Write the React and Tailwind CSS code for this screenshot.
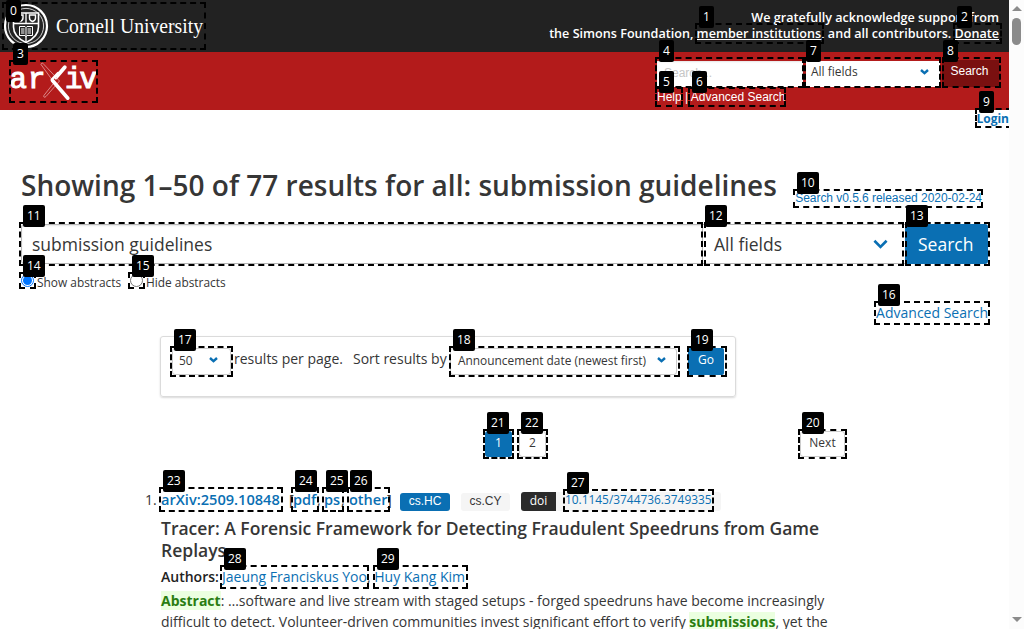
import React from "react";

const marks = [
  { n: 0, box: "left-[2px] top-[2px] w-[204px] h-[48px]", tag: "left-[6px] top-[0px]" },
  { n: 1, box: "left-[695px] top-[23px] w-[129px] h-[21px]", tag: "left-[699px] top-[6px]" },
  { n: 2, box: "left-[953px] top-[23px] w-[49px] h-[21px]", tag: "left-[957px] top-[6px]" },
  { n: 3, box: "left-[9px] top-[60px] w-[89px] h-[43px]", tag: "left-[13px] top-[43px]" },
  { n: 4, box: "left-[655px] top-[57px] w-[149px] h-[31px]", tag: "left-[659px] top-[40px]" },
  { n: 5, box: "left-[655px] top-[87px] w-[28px] h-[20px]", tag: "left-[659px] top-[71px]" },
  { n: 6, box: "left-[688px] top-[87px] w-[98px] h-[20px]", tag: "left-[692px] top-[71px]" },
  { n: 7, box: "left-[804px] top-[57px] w-[137px] h-[31px]", tag: "left-[806px] top-[40px]" },
  { n: 8, box: "left-[942px] top-[57px] w-[59px] h-[31px]", tag: "left-[943px] top-[40px]" },
  { n: 9, box: "left-[975px] top-[108px] w-[37px] h-[20px]", tag: "left-[979px] top-[91px]" },
  { n: 10, box: "left-[793px] top-[189px] w-[190px] h-[19px]", tag: "left-[797px] top-[172px]" },
  { n: 11, box: "left-[19px] top-[222px] w-[684px] h-[44px]", tag: "left-[23px] top-[205px]" },
  { n: 12, box: "left-[704px] top-[222px] w-[200px] h-[44px]", tag: "left-[705px] top-[205px]" },
  { n: 13, box: "left-[905px] top-[222px] w-[85px] h-[44px]", tag: "left-[906px] top-[205px]" },
  { n: 14, box: "left-[19px] top-[272px] w-[17px] h-[17px]", tag: "left-[23px] top-[255px]" },
  { n: 15, box: "left-[128px] top-[272px] w-[17px] h-[17px]", tag: "left-[132px] top-[255px]" },
  { n: 16, box: "left-[874px] top-[301px] w-[116px] h-[24px]", tag: "left-[878px] top-[284px]" },
  { n: 17, box: "left-[170px] top-[346px] w-[63px] h-[31px]", tag: "left-[174px] top-[329px]" },
  { n: 18, box: "left-[449px] top-[346px] w-[231px] h-[31px]", tag: "left-[453px] top-[329px]" },
  { n: 19, box: "left-[687px] top-[346px] w-[40px] h-[31px]", tag: "left-[691px] top-[329px]" },
  { n: 20, box: "left-[798px] top-[429px] w-[49px] h-[30px]", tag: "left-[802px] top-[412px]" },
  { n: 21, box: "left-[483px] top-[429px] w-[31px] h-[30px]", tag: "left-[487px] top-[412px]" },
  { n: 22, box: "left-[517px] top-[429px] w-[31px] h-[30px]", tag: "left-[521px] top-[412px]" },
  { n: 23, box: "left-[159px] top-[487px] w-[124px] h-[25px]", tag: "left-[163px] top-[470px]" },
  { n: 24, box: "left-[291px] top-[487px] w-[28px] h-[25px]", tag: "left-[295px] top-[470px]" },
  { n: 25, box: "left-[322px] top-[487px] w-[22px] h-[25px]", tag: "left-[326px] top-[470px]" },
  { n: 26, box: "left-[347px] top-[487px] w-[43px] h-[25px]", tag: "left-[350px] top-[470px]" },
  { n: 27, box: "left-[563px] top-[489px] w-[151px] h-[23px]", tag: "left-[567px] top-[472px]" },
  { n: 28, box: "left-[220px] top-[565px] w-[149px] h-[24px]", tag: "left-[224px] top-[548px]" },
  { n: 29, box: "left-[373px] top-[565px] w-[95px] h-[24px]", tag: "left-[377px] top-[548px]" },
];

function Marks() {
  return (
    <div className="pointer-events-none absolute inset-y-0 left-0 w-[1009px] overflow-hidden">
      {marks.map((m) => (
        <div key={m.n} className={"absolute border-2 border-dashed border-black " + m.box} />
      ))}
      {marks.map((m) => (
        <div
          key={m.n}
          className={"absolute h-[22px] rounded-[2px] bg-black px-1 text-[12px] leading-[21px] text-white " + m.tag}
        >
          {m.n}
        </div>
      ))}
    </div>
  );
}

function Chevron({ className, thick }) {
  return (
    <svg viewBox="0 0 16 10" className={className} fill="none" stroke="#0a6fb3" strokeWidth={thick}>
      <path d="M1.5 1.500 8 8l6.500-6.500" />
    </svg>
  );
}

function SmallChevron() {
  return (
    <svg viewBox="0 0 9 6" className="mb-[1px] h-[6px] w-[9px]" fill="none" stroke="#0a6fb3" strokeWidth="2.400">
      <path d="M1 1 4.500 4.200 8 1" />
    </svg>
  );
}

function CornellLogo() {
  return (
    <svg viewBox="0 0 210 52" className="h-[52px] w-[210px]">
      <circle cx="26" cy="26" r="21" fill="none" stroke="#fff" strokeWidth="2.2" />
      <circle cx="26" cy="26" r="17.6" fill="none" stroke="#fff" strokeWidth="0.800" />
      <path d="M13.500 13h25v14c0 7-5 12-12.500 15.500C18.500 39 13.500 34 13.500 27Z" fill="#222" stroke="#fff" strokeWidth="1.600" />
      <path d="M14 23.500h24.500M26 13v10M26 36v6" stroke="#fff" strokeWidth="1.300" />
      <path d="M17 15h6v3c0 2-1.500 3-3 3.500-1.500-.5-3-1.500-3-3.500ZM29.500 15h6v3c0 2-1.500 3-3 3.500-1.500-.5-3-1.500-3-3.500Z" fill="none" stroke="#fff" strokeWidth="1.400" />
      <path d="M19.500 26.500h5.500l1 1 1-1h5.500v9H27l-1 1-1-1h-5.500ZM26 27.500v9M21 29h3.500M21 31h3.500M21 33h3.500M27.500 29H31M27.500 31H31M27.500 33H31" fill="none" stroke="#fff" strokeWidth="1" />
      <text x="56" y="33" fill="#fff" fontFamily="Liberation Serif, serif" fontSize="21" textLength="147" lengthAdjust="spacingAndGlyphs">
        Cornell University
      </text>
    </svg>
  );
}

function ArxivLogo() {
  return (
    <svg viewBox="10 60 90 44" className="h-[44px] w-[90px]">
      <g fill="#fff" stroke="#fff" strokeWidth="1.100" fontFamily="Liberation Mono, monospace" fontSize="29">
        <text x="9.500 28" y="88">ar</text>
        <text x="65 79.500" y="88">iv</text>
      </g>
      <path d="M64.800 67.200 56 77.500" stroke="#fff" strokeWidth="3.800" strokeLinecap="round" />
      <path d="M41 64.500c.5-1.800 2-1.800 3 0L59.500 81 46 96.500c-1.500 1.500-3 .5-2-1.200L53 84" fill="none" stroke="#e9b5b5" strokeWidth="0.700" />
      <path d="M41 64.500 51.500 79" stroke="#e9b5b5" strokeWidth="0.700" />
      <path d="M52.500 80.500 67.800 98.200" stroke="#fff" strokeWidth="3.600" strokeLinecap="round" />
      <path d="M51.800 79.500 58 73" stroke="#fff" strokeWidth="2.500" strokeLinecap="round" />
    </svg>
  );
}

function Radio({ on }) {
  return on ? (
    <span className="flex size-[13px] items-center justify-center rounded-full border border-[#0075ff] bg-white">
      <span className="size-[9px] rounded-full bg-[#0075ff]" />
    </span>
  ) : (
    <span className="block size-[13px] rounded-full border border-[#767676] bg-white" />
  );
}

function Scrollbar() {
  return (
    <div className="flex h-full w-[15px] flex-col items-center justify-between bg-[#fcfcfc] pt-[6px] pb-[7px]">
      <div className="flex flex-col items-center gap-[7px]">
        <svg viewBox="0 0 10 5" className="h-[5px] w-[10px]" fill="#8b8b8b"><path d="M0 5 5 0l5 5Z" /></svg>
        <div className="h-[27px] w-[9px] rounded-full bg-[#8b8b8b]" />
      </div>
      <svg viewBox="0 0 10 5" className="h-[5px] w-[10px]" fill="#8b8b8b"><path d="M0 0h10L5 5Z" /></svg>
    </div>
  );
}

export default function App() {
  return (
    <div className="relative flex h-[629px] w-[1024px] overflow-hidden bg-white font-['Open_Sans','Noto_Sans',sans-serif] text-[#363636]">
      <div className="h-[629px] w-[1009px] overflow-hidden whitespace-nowrap">
        <header>
          <div className="flex h-[52px] justify-between bg-[#222] pr-[10px]">
            <CornellLogo />
            <div className="pt-[10px] text-right text-[12.6px] leading-[16px] font-semibold text-white">
              We gratefully acknowledge support from
              <br />
              the Simons Foundation, <a className="underline">member institutions</a>, and all contributors.{" "}
              <a className="underline">Donate</a>
            </div>
          </div>
          <div className="flex h-[58px] justify-between bg-[#b31b1b] pt-2 pr-[10px] pl-[10px]">
            <ArxivLogo />
            <div className="w-[342px] font-['Liberation_Sans',sans-serif] text-[12px] text-white">
              <div className="flex h-[27px]">
                <div className="mt-px w-[146px] bg-white pl-[7px] leading-[25px] text-[#c6c6c6] shadow-[inset_0_1px_2px_rgba(10,10,10,0.1)]">
                  Search...
                </div>
                <div className="mt-px ml-[3px] flex w-[134px] items-center justify-between bg-white pr-[11px] pb-[4px] pl-[5px] font-['Open_Sans',sans-serif] text-[#363636]">
                  All fields
                  <SmallChevron />
                </div>
                <div className="ml-[2px] w-[57px] bg-[#7a1010] pr-[2px] text-center leading-[23px]">Search</div>
              </div>
              <div className="pt-[2px] leading-[17px]">Help | Advanced Search</div>
            </div>
          </div>
        </header>

        <div className="pt-[1px] text-right text-[12px] leading-[16px] font-bold text-[#0a6fb3]">Login</div>

        <main>
          <div className="mt-[36px] flex h-[60px] justify-between pr-[27px] pl-[21px]">
            <h1 className="text-[28px] leading-[44px] font-semibold text-[#363636]">
              Showing 1–50 of 77 results for all: submission guidelines
            </h1>
            <div className="pt-[27px] font-['Liberation_Sans',sans-serif] text-[12px] leading-[16px] tracking-[-0.04px] text-[#0a6fb3]">
              Search v0.5.6 released 2020-02-24
            </div>
          </div>

          <div className="mt-[1px] ml-[21px] flex h-[40px] w-[967px] text-[17.5px] leading-[40px]">
            <div className="w-[682px] rounded-l-[3px] border border-[#b5b5b5] pl-[10px] leading-[38px] shadow-[inset_0_1px_2px_rgba(10,10,10,0.1)]">
              submission guidelines
            </div>
            <div className="flex w-[202px] items-center justify-between border-y border-[#b5b5b5] pr-[17px] pl-[11px]">
              All fields
              <Chevron className="h-[10px] w-[15px]" thick={2.8} />
            </div>
            <div className="flex-1 rounded-r-[3px] bg-[#0a6fb3] pl-[13px] text-white">Search</div>
          </div>

          <div className="mt-[10px] ml-[21px] flex h-[18px] text-[11.9px] leading-[17px]">
            <Radio on />
            <span className="w-[96px] pl-[3px]">Show abstracts</span>
            <Radio />
            <span className="pl-[3px]">Hide abstracts</span>
          </div>

          <div className="mt-[9px] pr-[21px] text-right text-[14px] leading-[24px] text-[#0a6fb3]">Advanced Search</div>

          <div className="mt-[11px] ml-[160px] flex h-[61px] w-[576px] rounded-[3px] border border-[#dbdbdb] pt-[11px] pl-[11px] text-[14px] shadow-[0_1px_2px_rgba(0,0,0,0.15)]">
            <div className="flex h-[27px] w-[59px] items-center justify-between rounded-[3px] border border-[#ccc] pr-[12px] pb-[2px] pl-[6px] text-[11.9px]">
              50
              <SmallChevron />
            </div>
            <div className="w-[219px] pl-[3px] leading-[22px]">
              results per page.<span className="inline-block w-[10px]" />Sort results by
            </div>
            <div className="flex h-[27px] w-[227px] items-center justify-between rounded-[3px] border border-[#ccc] pr-[10px] pb-[2px] pl-[7px] text-[11.9px]">
              Announcement date (newest first)
              <SmallChevron />
            </div>
            <div className="ml-[11px] h-[27px] w-[36px] rounded-[2px] bg-[#0a6fb3] text-center text-[12px] leading-[23px] text-white">
              Go
            </div>
          </div>

          <div className="mt-[34px] flex h-[26px] text-center text-[12px] leading-[21px]">
            <div className="ml-[485px] w-[27px] rounded-[3px] bg-[#0a6fb3] leading-[23px] text-white">1</div>
            <div className="ml-[7px] w-[27px] rounded-[3px] border border-[#ccc]">2</div>
            <div className="ml-[254px] w-[45px] rounded-[3px] border border-[#ccc]">Next</div>
          </div>

          <article className="mt-[32px] ml-[145px]">
            <div className="flex h-[22px] text-[14px] leading-[22px]">
              <span className="w-[16px]">1.</span>
              <span className="w-[128px] text-[14.6px] leading-[21px] font-semibold text-[#0a6fb3]">arXiv:2509.10848</span>
              <span className="flex w-[111px] text-[14.5px] leading-[21px] font-semibold text-[#0a6fb3]">
                <span className="w-[4px] font-normal text-[#363636]">[</span>
                <span className="w-[24px]">pdf</span>
                <span className="w-[7px] font-normal text-[#363636]">,</span>
                <span className="w-[17px]">ps</span>
                <span className="w-[8px] font-normal text-[#363636]">,</span>
                <span className="w-[38px]">other</span>
                <span className="font-normal text-[#363636]">]</span>
              </span>
              <div className="mt-[4px] flex h-[18px] font-['Liberation_Sans',sans-serif] text-[12px] leading-[16px]">
                <span className="w-[50px] rounded-[3px] bg-[#0a6fb3] text-center text-white">cs.HC</span>
                <span className="ml-[11px] w-[49px] rounded-[3px] bg-[#f5f5f5] text-center">cs.CY</span>
                <span className="-mt-px ml-[11px] w-[35px] rounded-l-[3px] bg-[#2b2b2b] text-center font-['Open_Sans',sans-serif] leading-[18px] text-white">
                  doi
                </span>
                <span className="-mt-px w-[165px] rounded-r-[3px] bg-[#f5f5f5] pl-[9px] font-['Open_Sans',sans-serif] text-[11.9px] leading-[15px] text-[#0a6fb3]">
                  10.1145/3744736.3749335
                </span>
              </div>
            </div>
            <h2 className="mt-[6px] ml-[16px] text-[17.500px] leading-[22px] font-semibold">
              Tracer: A Forensic Framework for Detecting Fraudulent Speedruns from Game
              <br />
              Replays
            </h2>
            <p className="mt-[5px] ml-[16px] text-[14px] leading-[21px]">
              <span className="inline-block w-[61px] font-semibold text-[#222]">Authors:</span>
              <a className="text-[#0a6fb3]">Jaeung Franciskus Yoo</a>, <a className="text-[#0a6fb3]">Huy Kang Kim</a>
            </p>
            <p className="mt-[3px] ml-[16px] text-[14px] leading-[21px]">
              <b className="bg-[#ebffe0] text-[#2a7d12]">Abstract</b>: …software and live stream with staged setups - forged
              speedruns have become increasingly
              <br />
              difficult to detect. Volunteer-driven communities invest significant effort to verify{" "}
              <b className="bg-[#ebffe0] text-[#2a7d12]">submissions</b>, yet the
            </p>
          </article>
        </main>
      </div>
      <Scrollbar />
      <Marks />
    </div>
  );
}
